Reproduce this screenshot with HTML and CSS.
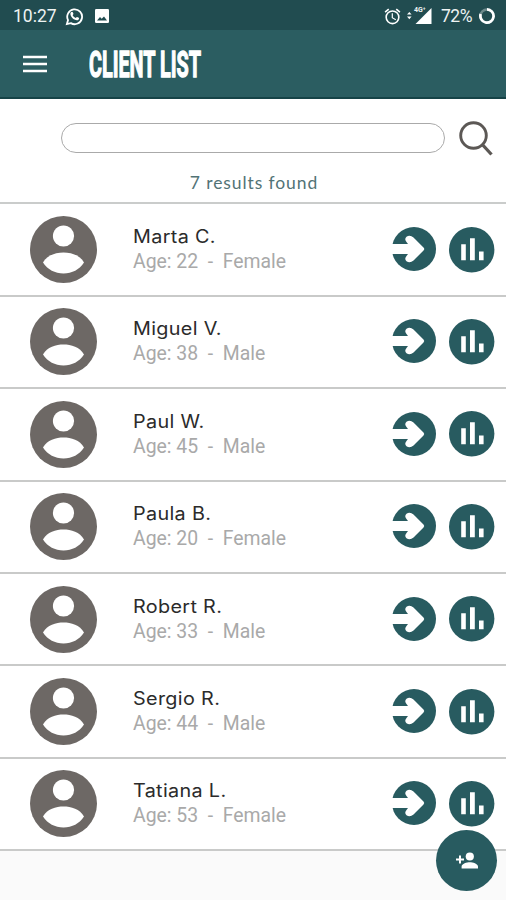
FILE: index.html
```html
<!DOCTYPE html>
<html lang="en">
<head>
<meta charset="utf-8">
<title>Client list</title>
<link rel="stylesheet" href="styles.css">
</head>
<body>
<svg class="defs" aria-hidden="true">
  <symbol id="avatar" viewBox="0 0 67 67">
    <circle cx="33.5" cy="33.5" r="33.5" fill="#6d6865"/>
    <circle cx="33.5" cy="20" r="10.6" fill="#fff"/>
    <path fill="#fff" d="M13 46.5C17 39 26 36.5 33.5 36.5S50 39 54 46.5C49.5 53.5 42 57.5 33.5 57.5S17.5 53.5 13 46.5z"/>
  </symbol>
  <symbol id="arrow" viewBox="0 0 45 45">
    <circle cx="22" cy="22" r="22" fill="#285b60"/>
    <path fill="#fff" d="M0 17H16L14.500 15Q12 12 14.500 9.700Q18 7.500 21.500 10.500L31.500 20.500Q33 22 31.500 23.500L21.500 33.500Q18 36.500 14.500 34.300Q12 32 14.500 29L16 27H0z"/>
  </symbol>
  <symbol id="chart" viewBox="0 0 46 46">
    <circle cx="22.700" cy="22.700" r="22.700" fill="#285b60"/>
    <path fill="#fff" d="M12.2 17.2h4.6v16h-4.6zM21 11.2h4.8v22H21zM30 24.4h4.6v8.8H30z"/>
  </symbol>
</svg>
<header>
  <div class="status">
    <span class="time">10:27</span>
    <svg class="whatsapp" viewBox="0 0 20 20"><path fill="none" stroke="#fff" stroke-width="1.9" d="M2 18l1.2-4.2A7.8 7.8 0 1 1 6.2 17z"/><path fill="#fff" d="M6.2 5.6c.8-1 1.7-.9 2 0l.7 1.6c.1.4-.5 1-.8 1.4.8 1.5 1.9 2.4 3.3 3 .4-.4.9-1.3 1.3-1.1l1.9.9c.5.3.1 1.7-.6 2.2-1.6 1.1-4.500-.2-6.300-2C5.900 9.800 5 7.200 6.200 5.600z"/></svg>
    <svg class="photo" viewBox="0 0 14 14"><rect width="14" height="14" rx="1.300" fill="#fff"/><path fill="#214c50" d="M2 11.500l3-3.500 1.700 1.800L9 7.500l3 4z"/></svg>
    <span class="spacer"></span>
    <svg class="alarm" viewBox="0 0 24 24"><path fill="#fff" d="M22 5.720l-4.600-3.860-1.290 1.530 4.600 3.860L22 5.720zM7.880 3.390L6.600 1.860 2 5.710l1.290 1.530 4.590-3.850zM12.500 8H11v6l4.750 2.850.75-1.230-4-2.370V8zM12 4a9 9 0 1 0 0 18 9 9 0 0 0 0-18zm0 16a7 7 0 1 1 0-14 7 7 0 0 1 0 14z"/></svg>
    <span class="signal"><svg viewBox="0 0 25 18"><path fill="#fff" d="M0 7.600L2.300 5l2.300 2.600zM0 9.600h4.600L2.300 12.200zM24.500 1v16H8.500z"/></svg><b>4G⁺</b></span>
    <span class="percent">72%</span>
    <svg class="battery" viewBox="0 0 16 16"><circle cx="8" cy="8" r="6.600" fill="none" stroke="#6c898b" stroke-width="2.500"/><path fill="none" stroke="#fff" stroke-width="2.700" d="M8 1.400A6.600 6.600 0 1 1 1.700 6"/></svg>
  </div>
  <div class="toolbar">
    <svg class="menu" viewBox="0 0 24 18"><path stroke="#fff" stroke-width="2.500" d="M0 2h24M0 9h24M0 16h24"/></svg>
    <h1>CLIENT LIST</h1>
  </div>
</header>
<section class="search">
  <div class="search-row">
    <input type="text" aria-label="Search">
    <svg class="lens" viewBox="0 0 34 36"><circle cx="14.500" cy="14.500" r="12.800" fill="none" stroke="#5c5855" stroke-width="2.900"/><path stroke="#5c5855" stroke-width="3.300" d="M23.300 23.500L32.500 33.500"/></svg>
  </div>
  <p class="results">7 results found</p>
</section>
<main>
  <article><svg class="avatar"><use href="#avatar"/></svg><div class="info"><h2>Marta C.</h2><p>Age: 22 &nbsp;- &nbsp;Female</p></div><svg class="arrow"><use href="#arrow"/></svg><svg class="chart"><use href="#chart"/></svg></article>
  <article><svg class="avatar"><use href="#avatar"/></svg><div class="info"><h2>Miguel V.</h2><p>Age: 38 &nbsp;- &nbsp;Male</p></div><svg class="arrow"><use href="#arrow"/></svg><svg class="chart"><use href="#chart"/></svg></article>
  <article><svg class="avatar"><use href="#avatar"/></svg><div class="info"><h2>Paul W.</h2><p>Age: 45 &nbsp;- &nbsp;Male</p></div><svg class="arrow"><use href="#arrow"/></svg><svg class="chart"><use href="#chart"/></svg></article>
  <article><svg class="avatar"><use href="#avatar"/></svg><div class="info"><h2>Paula B.</h2><p>Age: 20 &nbsp;- &nbsp;Female</p></div><svg class="arrow"><use href="#arrow"/></svg><svg class="chart"><use href="#chart"/></svg></article>
  <article><svg class="avatar"><use href="#avatar"/></svg><div class="info"><h2>Robert R.</h2><p>Age: 33 &nbsp;- &nbsp;Male</p></div><svg class="arrow"><use href="#arrow"/></svg><svg class="chart"><use href="#chart"/></svg></article>
  <article><svg class="avatar"><use href="#avatar"/></svg><div class="info"><h2>Sergio R.</h2><p>Age: 44 &nbsp;- &nbsp;Male</p></div><svg class="arrow"><use href="#arrow"/></svg><svg class="chart"><use href="#chart"/></svg></article>
  <article><svg class="avatar"><use href="#avatar"/></svg><div class="info"><h2>Tatiana L.</h2><p>Age: 53 &nbsp;- &nbsp;Female</p></div><svg class="arrow"><use href="#arrow"/></svg><svg class="chart"><use href="#chart"/></svg></article>
</main>
<button class="fab" aria-label="Add client"><svg viewBox="0 0 22 17"><circle cx="13.800" cy="4.500" r="4.100" fill="#fff"/><path fill="#fff" d="M5.600 16.500v-2c0-2.700 5.400-4.200 8.200-4.200s8.200 1.500 8.200 4.200v2zM3 3.500h2v3h3v2H5v3H3v-3H0v-2h3z"/></svg></button>
</body>
</html>
```
FILE: styles.css
```css
* { box-sizing: border-box; }
body {
  margin: 0;
  height: 900px;
  overflow: hidden;
  position: relative;
  background: #fafafa;
  font-family: Roboto, sans-serif;
}
svg { display: block; flex: none; }
.defs { position: absolute; width: 0; height: 0; }
h1, h2, p { margin: 0; }

header { height: 99px; background: #2b5d61; color: #fff; border-bottom: 2px solid #164347; }
.status {
  height: 30px;
  padding: 2px 11px 0 13px;
  display: flex;
  align-items: center;
  background: #214c50;
  font-size: 18px;
  color: #eef3f3;
}
.time { width: 43px; font-size: 17.500px; }
.whatsapp { width: 19px; height: 19px; margin-left: 9px; }
.photo { width: 14px; height: 14px; margin-left: 11px; }
.spacer { flex: 1; }
.alarm { width: 19px; height: 19px; margin-right: 5px; }
.signal { position: relative; width: 25px; height: 18px; margin-right: 9px; }
.signal svg { width: 25px; height: 18px; }
.signal b { position: absolute; left: 7px; top: -1px; font-size: 7px; line-height: 8px; }
.percent { width: 32px; font-size: 17.500px; letter-spacing: -0.500px; }
.battery { width: 16px; height: 16px; margin-left: 6px; }
.toolbar { height: 67px; padding: 1px 0 0 23px; display: flex; align-items: center; }
.menu { width: 24px; height: 18px; }
h1 {
  margin: 2px 0 0 42px;
  font-size: 36px;
  line-height: 40px;
  font-weight: 700;
  white-space: nowrap;
  -webkit-text-stroke: 1.300px #fff;
  transform: scaleX(0.550);
  transform-origin: left;
}

.search { height: 105.400px; padding-top: 22px; background: #fff; border-bottom: 2px solid #cacccb; }
.search-row { height: 36px; display: flex; align-items: flex-start; padding-left: 61px; }
input {
  width: 384px;
  height: 30px;
  margin-top: 2px;
  border: 1px solid #aaa;
  border-radius: 15px;
  background: #fff;
}
.lens { width: 34px; height: 36px; margin-left: 14px; }
.results {
  margin-top: 15px;
  padding-left: 2px;
  text-align: center;
  font: 17.500px/22px Lato, sans-serif;
  letter-spacing: 0.900px;
  color: #527376;
}

article {
  height: 92.400px;
  padding: 0 11px 0 30px;
  display: flex;
  align-items: center;
  background: #fff;
  border-bottom: 2px solid #c9cac9;
}
.avatar { width: 67px; height: 67px; }
.info { margin-left: 36px; flex: 1; }
h2 {
  font: 400 18px/24px Inter, sans-serif;
  letter-spacing: 0.300px;
  color: #2b2b2b;
  transform: scaleX(1.100);
  transform-origin: left;
}
.info p { font-size: 19.400px; line-height: 25px; font-weight: 400; color: #a9a9a9; white-space: nowrap; }
.arrow { width: 45px; height: 45px; }
.chart { width: 46px; height: 46px; margin-left: 12px; }

.fab {
  position: absolute;
  right: 9px;
  top: 830px;
  width: 61px;
  height: 61px;
  padding: 0;
  border: 0;
  border-radius: 50%;
  background: #285b60;
  display: grid;
  place-items: center;
}
.fab svg { width: 22px; height: 17px; }
```
